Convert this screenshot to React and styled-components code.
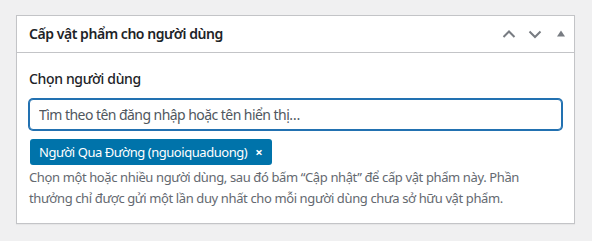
import React from "react";
import styled, { createGlobalStyle } from "styled-components";

const Global = createGlobalStyle`
  html, body { margin: 0; padding: 0; background: #f0f0f1; }
  body { font-family: "Noto Sans", "Open Sans", sans-serif; color: #1d2327; }
`;

const Page = styled.div`
  padding: 15px 17px 16px 16px;
`;

const Box = styled.div`
  background: #fff;
  border: 1px solid #c3c4c7;
  box-shadow: 0 1px 1px rgba(0,0,0,0.04);
`;

const Header = styled.div`
  display: flex;
  align-items: center;
  justify-content: space-between;
  height: 36px;
  padding: 0 0 0 12px;
  border-bottom: 1px solid #c3c4c7;
`;

const Title = styled.h2`
  margin: 0 0 2px;
  font-size: 14px;
  font-weight: 600;
  letter-spacing: -0.45px;
  color: #1d2327;
`;

const Actions = styled.div`
  display: flex;
  align-items: center;
`;

const IconBtn = styled.button`
  width: 26px;
  height: 36px;
  padding: 0;
  border: 0;
  background: none;
  display: flex;
  align-items: center;
  justify-content: center;
  color: #787c82;
`;

const Inside = styled.div`
  padding: 16px 12px 14px 12px;
`;

const Label = styled.label`
  display: block;
  font-size: 14px;
  font-weight: 500;
  line-height: 20px;
  letter-spacing: -0.35px;
  margin-bottom: 10px;
`;

const Input = styled.input`
  box-sizing: border-box;
  width: 100%;
  height: 31px;
  border: 1px solid #2271b1;
  box-shadow: 0 0 0 1px #2271b1;
  border-radius: 4px;
  padding: 0 9px;
  font-family: inherit;
  font-size: 14px;
  letter-spacing: -0.55px;
  color: #2c3338;
  outline: none;
  &::placeholder { color: #50575e; opacity: 1; }
`;

const Tags = styled.div`
  display: flex;
  margin-top: 9px;
`;

const Tag = styled.span`
  display: inline-flex;
  align-items: center;
  gap: 8px;
  height: 26px;
  padding: 0 10px 0 9px;
  background: #0073aa;
  color: #fff;
  border-radius: 3px;
  font-size: 13px;
  letter-spacing: -0.45px;
  margin-left: 1px;
`;

const Remove = styled.span`
  font-size: 13px;
  font-weight: 700;
`;

const Help = styled.p`
  margin: 2px 0 0;
  font-size: 13px;
  line-height: 21px;
  letter-spacing: -0.38px;
  color: #646970;
  max-width: 500px;
`;

const Chevron = ({ up }) => (
  <svg width="14" height="14" viewBox="0 0 14 14" fill="none">
    <path
      d={up ? "M1.5 10 L7 4.5 L12.5 10" : "M1.5 4.5 L7 10 L12.5 4.5"}
      stroke="#787c82"
      strokeWidth="2"
    />
  </svg>
);

const Tri = () => (
  <svg width="10" height="10" viewBox="0 0 10 10">
    <path d="M5 1.5 L9 7.5 L1 7.5 Z" fill="#787c82" />
  </svg>
);

export default function App() {
  return (
    <>
      <Global />
      <Page>
        <Box>
          <Header>
            <Title>Cấp vật phẩm cho người dùng</Title>
            <Actions>
              <IconBtn><Chevron up /></IconBtn>
              <IconBtn><Chevron /></IconBtn>
              <IconBtn><Tri /></IconBtn>
            </Actions>
          </Header>
          <Inside>
            <Label>Chọn người dùng</Label>
            <Input placeholder="Tìm theo tên đăng nhập hoặc tên hiển thị…" />
            <Tags>
              <Tag>Người Qua Đường (nguoiquaduong) <Remove>×</Remove></Tag>
            </Tags>
            <Help>
              Chọn một hoặc nhiều người dùng, sau đó bấm “Cập nhật” để cấp vật phẩm này. Phần thưởng chỉ được gửi một lần duy nhất cho mỗi người dùng chưa sở hữu vật phẩm.
            </Help>
          </Inside>
        </Box>
      </Page>
    </>
  );
}
